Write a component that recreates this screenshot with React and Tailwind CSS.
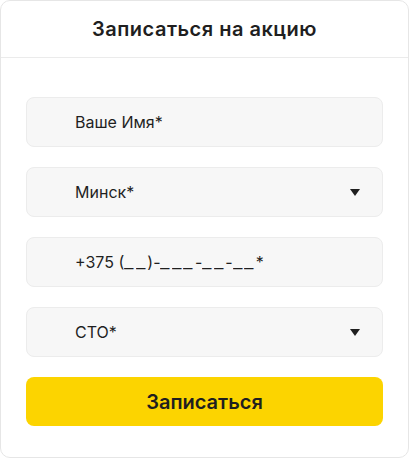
import { useState } from 'react';

// each underscore of the phone mask is its own slot, a bit wider than the glyph
const Mask = ({ text }) =>
    text.split('').map((ch, i) =>
        ch === '_'
            ? <span key={i} className="inline-block w-[11.5px] scale-x-[1.3] origin-left">_</span>
            : ch
    );

const Field = ({ placeholder, select }) => (
    <div className="relative h-[50px] rounded-[8px] bg-[#f7f7f7] border border-[#ececec] flex items-center pl-[48px] pr-[22px]">
        <span className="text-[16px] text-[#1f1f1f] flex-1"><Mask text={placeholder} /></span>
        {select && (
            <svg width="10" height="8" viewBox="0 0 10 8" className="mt-[1px]">
                <path d="M0 0 H10 L5 7 Z" fill="#1f1f1f" />
            </svg>
        )}
    </div>
);

const App = () => {
    const [sent, setSent] = useState(false);

    return (
        <div className="w-[409px] h-[458px] bg-white" style={{ fontFamily: 'Inter, "Noto Sans", sans-serif' }}>
            <div className="h-full border border-[#e6e6e6] rounded-[10px] flex flex-col">
                <div className="h-[57px] border-b border-[#ebebeb] flex items-center justify-center">
                    <h2 className="text-[20px] font-semibold text-[#1f1f1f] tracking-[0.5px]">Записаться на акцию</h2>
                </div>
                <div className="px-[25px] pt-[39px] flex flex-col gap-[20px]">
                    <Field placeholder="Ваше Имя*" />
                    <Field placeholder="Минск*" select />
                    <Field placeholder="+375 (__)-___-__-__*" />
                    <Field placeholder="СТО*" select />
                    <button
                        onClick={() => setSent(true)}
                        className="h-[49px] rounded-[8px] bg-[#fcd400] text-[20px] font-semibold text-[#1f1f1f]"
                    >
                        Записаться
                    </button>
                </div>
            </div>
        </div>
    );
};

export default App;
